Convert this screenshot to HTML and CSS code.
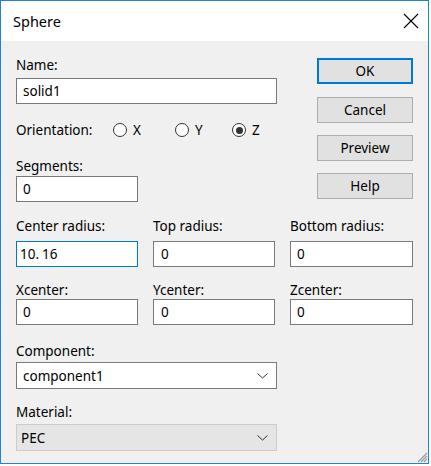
FILE: index.html
```html
<!DOCTYPE html>
<html>
<head>
<meta charset="utf-8">
<link rel="stylesheet" href="styles.css">
</head>
<body>
<div class="window">
  <div class="titlebar">
    <span class="title">Sphere</span>
    <svg class="close" width="16" height="16" viewBox="0 0 16 16"><path d="M1 1 L15 15 M15 1 L1 15" stroke="#000" stroke-width="1.1" fill="none"/></svg>
  </div>
  <div class="content">
    <div class="top">
      <div class="left">
        <div class="label">Name:</div>
        <div class="field name-field">solid1</div>
        <div class="orient">
          <span class="orient-label">Orientation:</span>
          <span class="radio rx"><span class="circle"></span><span>X</span></span>
          <span class="radio ry"><span class="circle"></span><span>Y</span></span>
          <span class="radio rz"><span class="circle checked"></span><span>Z</span></span>
        </div>
        <div class="label seg-label">Segments:</div>
        <div class="field seg-field">0</div>
      </div>
      <div class="buttons">
        <div class="btn default">OK</div>
        <div class="btn">Cancel</div>
        <div class="btn">Preview</div>
        <div class="btn">Help</div>
      </div>
    </div>
    <div class="grid">
      <div class="cell r1"><div class="label">Center radius:</div><div class="field focused">10<span class="dot">.</span>16</div></div>
      <div class="cell r1"><div class="label">Top radius:</div><div class="field pad8">0</div></div>
      <div class="cell r1"><div class="label">Bottom radius:</div><div class="field">0</div></div>
      <div class="cell r2"><div class="label">Xcenter:</div><div class="field">0</div></div>
      <div class="cell r2"><div class="label">Ycenter:</div><div class="field pad8">0</div></div>
      <div class="cell r2"><div class="label">Zcenter:</div><div class="field">0</div></div>
    </div>
    <div class="label comp-label">Component:</div>
    <div class="select comp-select"><span>component1</span><svg class="chev" width="11" height="6" viewBox="0 0 11 6"><path d="M0.5 0.5 L5.5 5 L10.5 0.5" stroke="#333" stroke-width="1" fill="none"/></svg></div>
    <div class="label mat-label">Material:</div>
    <div class="select disabled mat-select"><span>PEC</span><svg class="chev" width="11" height="6" viewBox="0 0 11 6"><path d="M0.5 0.5 L5.5 5 L10.5 0.5" stroke="#333" stroke-width="1" fill="none"/></svg></div>
  </div>
  <svg class="grip" width="12" height="12" viewBox="0 0 12 12">
    <path d="M11 2 L2 11 M11 5 L5 11 M11 8 L8 11" stroke="#9a9a9a" stroke-width="1.2" fill="none"/>
  </svg>
</div>
</body>
</html>
```
FILE: styles.css
```css
* { box-sizing: border-box; }
html, body { margin: 0; padding: 0; background: #ffffff; }
body {
  font-family: "Noto Sans", "Open Sans", sans-serif;
  font-size: 13.5px;
  line-height: 16px;
  color: #000;
}
.window {
  position: relative;
  width: 429px;
  height: 464px;
  border: 1px solid #1a84d8;
  display: flex;
  flex-direction: column;
  background: #f0f0f0;
}
.titlebar {
  height: 40px;
  background: #fff;
  display: flex;
  align-items: center;
  justify-content: space-between;
  padding-left: 12px;
  padding-right: 9px;
}
.title { font-size: 14.5px; line-height: 20px; }
.close { display: block; }
.content {
  flex: 1;
  padding: 16px 15px 0 15px;
}
.top { display: flex; justify-content: space-between; }
.left { width: 261px; }
.label { height: 16px; white-space: nowrap; }
.field {
  height: 26px;
  background: #fff;
  border: 1px solid #7a7a7a;
  padding: 4px 6px;
  white-space: nowrap;
}
.field.focused { border-color: #0078d7; padding-left: 3px; }
.field.pad8 { padding-left: 7px; }
.dot { margin-right: 3px; }
.name-field { margin-top: 5px; }
.orient {
  margin-top: 17px;
  height: 18px;
  display: flex;
  align-items: center;
}
.orient-label { width: 97px; }
.radio { display: flex; align-items: center; gap: 6px; }
.rx { width: 62px; }
.ry { width: 57px; }
.circle {
  width: 14px;
  height: 14px;
  border-radius: 50%;
  border: 1px solid #333;
  background: #fff;
  display: flex;
  align-items: center;
  justify-content: center;
}
.circle.checked::after {
  content: "";
  width: 7px;
  height: 7px;
  border-radius: 50%;
  background: #333;
}
.seg-label { margin-top: 19px; }
.seg-field { margin-top: 2px; width: 122px; }
.buttons {
  width: 96px;
  margin-top: 1px;
  display: flex;
  flex-direction: column;
  gap: 12px;
}
.btn {
  height: 26px;
  background: #e1e1e1;
  border: 1px solid #adadad;
  display: flex;
  align-items: center;
  justify-content: center;
}
.btn.default { border: 2px solid #0078d7; margin-bottom: 1px; }
.grid {
  margin-top: 16px;
  display: grid;
  grid-template-columns: 122px 122px 123px;
  column-gap: 15px;
  row-gap: 15px;
}
.r1 .field { margin-top: 7px; }
.r2 .field { margin-top: 1px; }
.comp-label { margin-top: 18px; }
.select {
  width: 261px;
  height: 27px;
  background: #fff;
  border: 1px solid #7a7a7a;
  display: flex;
  align-items: center;
  justify-content: space-between;
  padding: 0 8px 0 6px;
}
.comp-select { margin-top: 3px; }
.mat-label { margin-top: 15px; }
.mat-select { margin-top: 4px; }
.select.disabled {
  background: #e5e5e5;
  border-color: #cccccc;
  padding-left: 4px;
}
.chev { display: block; }
.grip { position: absolute; right: 0; bottom: 0; }
```
